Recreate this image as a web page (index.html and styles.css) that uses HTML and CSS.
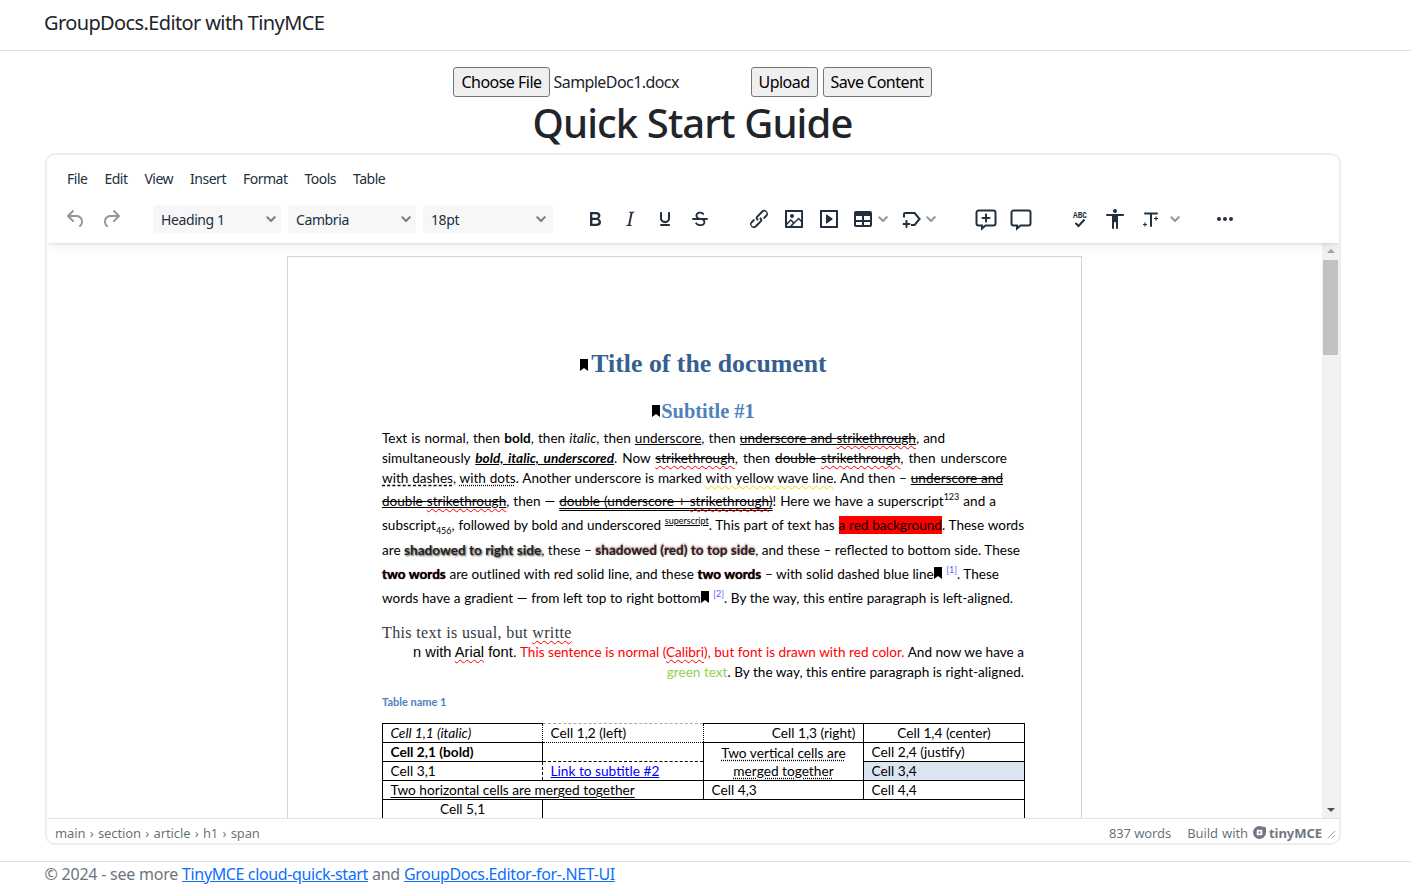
FILE: index.html
```html
<!DOCTYPE html>
<html lang="en">
<head>
<meta charset="utf-8">
<title>GroupDocs.Editor with TinyMCE</title>
<link rel="stylesheet" href="styles.css">
</head>
<body>
<header class="site-header"><a class="brand">GroupDocs.Editor with TinyMCE</a></header>
<main class="main">
  <form class="upload-form">
    <button type="button" class="btn">Choose File</button>
    <span class="file-name">SampleDoc1.docx</span>
    <button type="button" class="btn">Upload</button>
    <button type="button" class="btn">Save Content</button>
  </form>
  <h1 class="page-title">Quick Start Guide</h1>
  <section class="editor">
    <nav class="menubar">
      <span>File</span><span>Edit</span><span>View</span><span>Insert</span><span>Format</span><span>Tools</span><span>Table</span>
    </nav>
    <div class="toolbar">
      <div class="group g-history">
        <span class="tb disabled"><svg viewBox="0 0 24 24"><path d="M6.4 8H12c3.7 0 6.2 2 6.8 5.1.6 2.7-.4 5.6-2.3 6.8a1 1 0 0 1-1-1.8c1.1-.6 1.8-2.7 1.4-4.6-.5-2.1-2.1-3.5-4.9-3.5H6.4l3.3 3.3a1 1 0 1 1-1.4 1.4l-5-5a1 1 0 0 1 0-1.4l5-5a1 1 0 0 1 1.4 1.4L6.4 8Z"/></svg></span>
        <span class="tb disabled"><svg viewBox="0 0 24 24"><path d="M6.4 8H12c3.7 0 6.2 2 6.8 5.1.6 2.7-.4 5.6-2.3 6.8a1 1 0 0 1-1-1.8c1.1-.6 1.8-2.7 1.4-4.6-.5-2.1-2.1-3.5-4.9-3.5H6.4l3.3 3.3a1 1 0 1 1-1.4 1.4l-5-5a1 1 0 0 1 0-1.4l5-5a1 1 0 0 1 1.4 1.4L6.4 8Z" transform="matrix(-1 0 0 1 24 0)"/></svg></span>
      </div>
      <div class="group g-selects">
        <span class="select w128">Heading 1<svg class="chev" viewBox="0 0 10 6"><path d="M.6.6a1 1 0 0 1 1.4 0L5 3.6l3-3a1 1 0 1 1 1.4 1.4L5.7 5.7a1 1 0 0 1-1.4 0L.6 2A1 1 0 0 1 .6.6Z"/></svg></span>
        <span class="select w128">Cambria<svg class="chev" viewBox="0 0 10 6"><path d="M.6.6a1 1 0 0 1 1.4 0L5 3.6l3-3a1 1 0 1 1 1.4 1.4L5.7 5.7a1 1 0 0 1-1.4 0L.6 2A1 1 0 0 1 .6.6Z"/></svg></span>
        <span class="select w130">18pt<svg class="chev" viewBox="0 0 10 6"><path d="M.6.6a1 1 0 0 1 1.4 0L5 3.6l3-3a1 1 0 1 1 1.4 1.4L5.7 5.7a1 1 0 0 1-1.4 0L.6 2A1 1 0 0 1 .6.6Z"/></svg></span>
      </div>
      <div class="group g-format">
        <span class="tb"><svg viewBox="0 0 24 24"><path d="M7.8 19c-.3 0-.5 0-.6-.2l-.2-.5V5.7c0-.2 0-.4.2-.5l.6-.2h5c1.5 0 2.7.3 3.5 1 .7.6 1.1 1.4 1.1 2.5a3 3 0 0 1-.6 1.9c-.4.6-1 1-1.6 1.2.4.1.9.3 1.3.6s.8.7 1 1.2c.4.4.5 1 .5 1.6 0 1.3-.4 2.3-1.3 3-.8.7-2.1 1-3.8 1H7.8Zm5-8.3c.6 0 1.2-.1 1.6-.5.4-.3.6-.7.6-1.3 0-1.1-.8-1.7-2.3-1.7H9.3v3.5h3.4Zm.5 6c.7 0 1.3-.1 1.7-.4.4-.4.6-.9.6-1.5s-.2-1-.7-1.4c-.4-.3-1-.4-2-.4H9.4v3.8h4Z"/></svg></span>
        <span class="tb"><svg viewBox="0 0 24 24"><path d="m16.7 4.7-.1.9h-.3c-.6 0-1 0-1.4.3-.3.3-.4.6-.5 1.1l-2.1 9.8v.6c0 .5.4.8 1.4.8h.2l-.2.8H8l.2-.8h.2c1.1 0 1.8-.5 2-1.5l2-9.8.1-.5c0-.6-.4-.8-1.4-.8h-.3l.2-.9h5.8Z"/></svg></span>
        <span class="tb"><svg viewBox="0 0 24 24"><path d="M16 5c.6 0 1 .4 1 1v5.5a4 4 0 0 1-.4 1.8l-1 1.4a5.3 5.3 0 0 1-5.5 1 5 5 0 0 1-1.6-1c-.5-.4-.8-.9-1.1-1.4a4 4 0 0 1-.4-1.8V6c0-.6.4-1 1-1s1 .4 1 1v5.5c0 .3 0 .6.2 1l.6.7a3.3 3.3 0 0 0 2.2.8 3.4 3.4 0 0 0 2.2-.8c.3-.2.4-.5.6-.8l.2-.9V6c0-.6.4-1 1-1ZM8 17h8c.6 0 1 .4 1 1s-.4 1-1 1H8a1 1 0 0 1 0-2Z"/></svg></span>
        <span class="tb"><svg viewBox="0 0 24 24"><path d="M15.6 8.5c-.5-.7-1-1.1-1.3-1.3-.6-.4-1.3-.6-2-.6-2.7 0-2.8 1.7-2.8 2.1 0 1.6 1.8 2 3.2 2.3 4.4.9 4.6 2.8 4.6 3.9 0 1.4-.7 4.1-5 4.1A6.2 6.2 0 0 1 7 16.4l1.5-1.1c.4.6 1.6 2 3.7 2 1.6 0 2.5-.4 3-1 .5-.8.3-2-.3-2.6-.7-.7-1.7-.9-3.4-1.2-2-.4-4-1.3-4-3.9 0-2.1 1.4-3.9 4.4-3.9 1.7 0 3 .6 3.8 1.4l.5.6-.6.8Z"/><path d="M5 11h14a1 1 0 0 1 0 2H5a1 1 0 0 1 0-2Z"/></svg></span>
      </div>
      <div class="group g-insert">
        <span class="tb"><svg viewBox="0 0 24 24"><path d="M6.2 12.3a1 1 0 0 1 1.4 1.4l-2 2a2 2 0 1 0 2.6 2.8l4.8-4.8a1 1 0 0 0 0-1.4 1 1 0 1 1 1.4-1.3 2.9 2.9 0 0 1 0 4L9.6 20a3.9 3.9 0 0 1-5.5-5.5l2-2Zm11.6-.6a1 1 0 0 1-1.4-1.4l2-2a2 2 0 1 0-2.6-2.8L11 10.3a1 1 0 0 0 0 1.4A1 1 0 1 1 9.6 13a2.9 2.9 0 0 1 0-4L14.4 4a3.9 3.9 0 0 1 5.5 5.5l-2 2Z"/></svg></span>
        <span class="tb"><svg viewBox="0 0 24 24"><path d="m5 15.7 3.3-3.2c.3-.3.7-.3 1 0L12 15l4.1-4c.3-.4.8-.4 1 0l2 1.9V5H5v10.7ZM5 18v1h3l2.8-2.9-2-2L5 17.9Zm14-3-2.5-2.4-6.4 6.5H19v-4ZM4 3h16c.6 0 1 .4 1 1v16c0 .6-.4 1-1 1H4a1 1 0 0 1-1-1V4c0-.6.4-1 1-1Zm6 8a2 2 0 1 0 0-4 2 2 0 0 0 0 4Z"/></svg></span>
        <span class="tb"><svg viewBox="0 0 24 24"><path d="M4 3h16c.6 0 1 .4 1 1v16c0 .6-.4 1-1 1H4a1 1 0 0 1-1-1V4c0-.6.4-1 1-1Zm1 2v14h14V5H5Zm4.8 2.6 5.6 4a.5.5 0 0 1 0 .8l-5.6 4A.5.5 0 0 1 9 16V8a.5.5 0 0 1 .8-.4Z"/></svg></span>
        <span class="tb narrow"><svg viewBox="0 0 24 24"><path fill-rule="evenodd" d="M5 4h14a2 2 0 0 1 2 2v12a2 2 0 0 1-2 2H5a2 2 0 0 1-2-2V6c0-1.100.9-2 2-2Zm0 5v4h6V9H5Zm8 0v4h6V9h-6Zm-8 6v3h6v-3H5Zm8 0v3h6v-3h-6Z"/></svg><svg class="chev small" viewBox="0 0 10 6"><path d="M.6.6a1 1 0 0 1 1.4 0L5 3.6l3-3a1 1 0 1 1 1.4 1.4L5.700 5.700a1 1 0 0 1-1.400 0L.6 2A1 1 0 0 1 .6.6Z"/></svg></span>
        <span class="tb narrow"><svg viewBox="0 0 24 24"><path class="line" d="M5 10.500V7.200C5 6.500 5.500 6 6.200 6h9.400l5 6-5 6H12"/><path transform="translate(1.500 0)" d="M6 13c.6 0 1 .4 1 1v2h2a1 1 0 0 1 0 2H7v2a1 1 0 0 1-2 0v-2H3a1 1 0 0 1 0-2h2v-2c0-.6.4-1 1-1Z"/></svg><svg class="chev small" viewBox="0 0 10 6"><path d="M.6.6a1 1 0 0 1 1.4 0L5 3.6l3-3a1 1 0 1 1 1.4 1.4L5.700 5.700a1 1 0 0 1-1.400 0L.6 2A1 1 0 0 1 .6.6Z"/></svg></span>
      </div>
      <div class="group g-comment">
        <span class="tb"><svg viewBox="0 0 24 24"><path class="line" d="M4.500 3.500h15a2 2 0 0 1 2 2v11a2 2 0 0 1-2 2h-8l-3.500 3v-3H4.500a2 2 0 0 1-2-2v-11a2 2 0 0 1 2-2Z"/><path d="M12 6.500c.6 0 1 .4 1 1V10h2.500a1 1 0 0 1 0 2H13v2.500a1 1 0 0 1-2 0V12H8.500a1 1 0 0 1 0-2H11V7.500c0-.6.4-1 1-1Z"/></svg></span>
        <span class="tb"><svg viewBox="0 0 24 24"><path class="line" d="M4.500 3.500h15a2 2 0 0 1 2 2v11a2 2 0 0 1-2 2h-8l-3.500 3v-3H4.500a2 2 0 0 1-2-2v-11a2 2 0 0 1 2-2Z"/></svg></span>
      </div>
      <div class="group g-tools">
        <span class="tb"><svg viewBox="0 0 24 24"><text class="abc" x="13" y="11" textLength="14" lengthAdjust="spacingAndGlyphs">ABC</text><path class="line" d="M8.500 16l3 3 6-6.500"/></svg></span>
        <span class="tb"><svg viewBox="0 0 24 24"><path d="M12 2a2 2 0 0 1 2 2 2 2 0 0 1-2 2 2 2 0 0 1-2-2c0-1.100.9-2 2-2Zm8 7h-5v12c0 .6-.4 1-1 1a1 1 0 0 1-1-1v-5c0-.6-.4-1-1-1s-1 .4-1 1v5c0 .6-.4 1-1 1a1 1 0 0 1-1-1V9H4a1 1 0 1 1 0-2h16c.6 0 1 .4 1 1s-.4 1-1 1Z"/></svg></span>
        <span class="tb narrow wide-chev"><svg viewBox="0 0 24 24"><path d="M7 5.500h12a1 1 0 0 1 0 2h-5V19a1 1 0 0 1-2 0V7.500H7a1 1 0 0 1 0-2Z"/><path d="M17.500 9.500h1.200v1.400h1.400v1.200h-1.400v1.400h-1.200v-1.400h-1.400v-1.200h1.400ZM6.400 15.500h1.200v1.400H9v1.200H7.600v1.400H6.400v-1.400H5v-1.200h1.400Z"/></svg><svg class="chev small" viewBox="0 0 10 6"><path d="M.6.6a1 1 0 0 1 1.4 0L5 3.6l3-3a1 1 0 1 1 1.4 1.4L5.700 5.700a1 1 0 0 1-1.400 0L.6 2A1 1 0 0 1 .6.6Z"/></svg></span>
      </div>
      <div class="group g-more">
        <span class="tb"><svg viewBox="0 0 24 24"><path d="M6 10a2 2 0 0 0-2 2c0 1.100.9 2 2 2a2 2 0 0 0 2-2 2 2 0 0 0-2-2Zm12 0a2 2 0 0 0-2 2c0 1.100.9 2 2 2a2 2 0 0 0 2-2 2 2 0 0 0-2-2Zm-6 0a2 2 0 0 0-2 2c0 1.100.9 2 2 2a2 2 0 0 0 2-2 2 2 0 0 0-2-2Z"/></svg></span>
      </div>
    </div>
    <div class="edit-area">
      <div class="canvas">
        <article class="doc-page">
          <h2 class="doc-title"><svg class="mark" viewBox="0 0 8 12"><path d="M0 0h8v12L4 9 0 12Z"/></svg>Title of the document</h2>
          <h3 class="doc-sub"><svg class="mark" viewBox="0 0 8 12"><path d="M0 0h8v12L4 9 0 12Z"/></svg>Subtitle #1</h3>
          <div class="para">
            <div class="ln h20 l1">Text is normal, then <b>bold</b>, then <i>italic</i>, then <u>underscore</u>, then <span class="st"><u>underscore and <span class="sp">strikethrough</span></u></span>, and</div>
            <div class="ln h20 l2">simultaneously <b><i><u>bold, italic, underscored</u></i></b>. Now <span class="st"><span class="sp">strikethrough</span></span>, then <span class="st">double <span class="sp">strikethrough</span></span>, then underscore</div>
            <div class="ln h23 l3"><span class="dash">with dashes</span>, <span class="dot">with dots</span>. Another underscore is marked <span class="yw">with yellow wave line</span>. And then – <span class="st"><u>underscore and</u></span></div>
            <div class="ln h24 l4"><span class="st"><u>double <span class="sp">strikethrough</span></u></span>, then — <span class="st"><span class="dbl">double (underscore + <span class="sp">strikethrough</span>)</span></span>! Here we have a superscript<sup>123</sup> and a</div>
            <div class="ln h25 l5">subscript<sub>456</sub>, followed by bold and underscored <sup class="u-sup">superscript</sup>. This part of text has <span class="redbg">a red background</span>. These words</div>
            <div class="ln h24 l6">are <span class="sh1">shadowed to right side</span>, these – <span class="sh2">shadowed (red) to top side</span>, and these – reflected to bottom side. These</div>
            <div class="ln h24 l7"><span class="outline">two words</span> are outlined with red solid line, and these <span class="outline">two words</span> – with solid dashed blue line<svg class="mark ink" viewBox="0 0 8 12"><path d="M0 0h8v12L4 9 0 12Z"/></svg> <sup class="note">[1]</sup>. These</div>
            <div class="ln h24 l8">words have a gradient — from left top to right bottom<svg class="mark ink" viewBox="0 0 8 12"><path d="M0 0h8v12L4 9 0 12Z"/></svg> <sup class="note">[2]</sup>. By the way, this entire paragraph is left-aligned.</div>
          </div>
          <p class="usual">This text is usual, but <span class="sp">writte</span></p>
          <div class="mixed"><span class="arial">n with <span class="sp">Arial</span> font.</span> <span class="red">This sentence is normal (<span class="sp">Calibri</span>), but font is drawn with red color.</span> And now we have a</div>
          <div class="right"><span class="green">green text</span>. By the way, this entire paragraph is right-aligned.</div>
          <p class="caption">Table name 1</p>
          <table class="doc-table">
            <tr>
              <td class="c1 no-right"><i>Cell 1,1 (italic)</i></td>
              <td class="c2 cell12">Cell 1,2 (left)</td>
              <td class="c3 tr no-left">Cell 1,3 (right)</td>
              <td class="c4 tc">Cell 1,4 (center)</td>
            </tr>
            <tr>
              <td><b>Cell 2,1 (bold)</b></td>
              <td class="cell22"></td>
              <td rowspan="2" class="tc merged"><span class="dot">Two vertical cells are</span><br><span class="dot">merged together</span></td>
              <td>Cell 2,4 (justify)</td>
            </tr>
            <tr>
              <td class="no-right">Cell 3,1</td>
              <td class="cell32"><a class="doc-link">Link to subtitle #2</a></td>
              <td class="shade">Cell 3,4</td>
            </tr>
            <tr>
              <td colspan="2"><span class="dbl">Two horizontal cells are merged together</span></td>
              <td>Cell 4,3</td>
              <td>Cell 4,4</td>
            </tr>
            <tr>
              <td class="tc">Cell 5,1</td>
              <td colspan="3"></td>
            </tr>
          </table>
        </article>
      </div>
      <div class="scrollbar">
        <span class="arrow up"></span>
        <span class="thumb"></span>
        <span class="arrow down"></span>
      </div>
    </div>
    <div class="statusbar">
      <span class="path">main › section › article › h1 › span</span>
      <span class="status-right">
        <span class="words">837 words</span>
        <span class="build">Build with <svg class="tiny-logo" viewBox="0 0 14 14"><path fill-rule="evenodd" d="M7 0l5.500 1a1.500 1.500 0 0 1 1.500 1.500V7A7 7 0 1 1 7 0ZM4 5v5h5.500a.5.5 0 0 0 .5-.5V4.500a.5.5 0 0 0-.5-.5H5a1 1 0 0 0-1 1Zm2 1h2v2H6V6Z"/></svg><b class="tiny-word">tinyMCE</b></span>
        <svg class="grip" viewBox="0 0 10 10"><path d="M9 1 1 9M9 5.500 5.500 9"/></svg>
      </span>
    </div>
  </section>
</main>
<footer class="site-footer">© 2024 - see more <a>TinyMCE cloud-quick-start</a> and <a>GroupDocs.Editor-for-.NET-UI</a></footer>
</body>
</html>
```
FILE: styles.css
```css
* { box-sizing: border-box; }
html, body { margin: 0; height: 100%; }
body { font-family: "Noto Sans", "Open Sans", sans-serif; font-size: 16px; color: #212529; background: #fff; overflow: hidden; }
.site-header { height: 51px; border-bottom: 1px solid #dee2e6; padding: 9px 44px 0; }
.brand { font-size: 20px; line-height: 28px; letter-spacing: -.62px; color: #212529; }
.main { padding: 16px 70px 0 45px; }
.upload-form { display: flex; justify-content: center; align-items: center; height: 30px; padding-right: 1px; }
.btn { height: 30px; font: inherit; letter-spacing: -.52px; background: #efefef; border: 1px solid #767676; border-radius: 3px; padding: 0 7px; color: #000; margin-left: 5px; }
.btn:first-child { margin-left: 0; }
.file-name { width: 196px; padding-left: 4px; letter-spacing: -.57px; color: #212529; }
.page-title { margin: 2px 0 6px; padding-right: 1px; font-size: 40px; line-height: 48px; font-weight: 500; text-align: center; letter-spacing: -.9px; color: #212529; }
.editor { height: 692px; border: 2px solid #eee; border-radius: 10px; display: flex; flex-direction: column; overflow: hidden; }
.menubar { height: 47px; display: flex; align-items: center; padding: 0 0 0 20px; gap: 17px; font-size: 14px; letter-spacing: -.5px; color: #222f3e; flex: none; }
.toolbar { height: 41px; display: flex; align-items: flex-start; padding-left: 12px; flex: none; box-shadow: 0 2px 2px -1px rgba(34,47,62,.1), 0 8px 8px -4px rgba(34,47,62,.07); position: relative; z-index: 1; }
.group { display: flex; align-items: center; height: 34px; }
.g-history { gap: 1px; }
.g-selects { gap: 7px; margin-left: 25px; }
.g-format { gap: 1px; margin-left: 25px; }
.g-insert { gap: 1px; margin-left: 25px; }
.g-comment { gap: 1px; margin-left: 27px; }
.g-tools { gap: 2px; margin-left: 24px; }
.g-more { margin-left: 24px; }
.tb { width: 34px; height: 34px; display: flex; align-items: center; justify-content: center; flex: none; }
.tb svg { width: 24px; height: 24px; fill: #222f3e; flex: none; }
.tb.disabled svg { fill: rgba(34,47,62,.5); }
.tb.narrow { width: 47px; justify-content: flex-start; padding-left: 4px; }
.tb.wide-chev { width: 50px; }
.tb .line { fill: none; stroke: #222f3e; stroke-width: 2; }
.abc { font-family: "Liberation Mono", monospace; font-size: 9.500px; font-weight: 700; text-anchor: middle; fill: #222f3e; }
.tb svg.small { width: 10px; height: 6px; fill: rgba(34,47,62,.5); margin-left: 3px; }
.tb.wide-chev svg.small { margin-left: 8px; }
.select { height: 28px; display: flex; align-items: center; justify-content: space-between; padding: 0 5px 0 8px; background: #f7f7f7; border-radius: 3px; font-size: 14px; letter-spacing: -.4px; color: #222f3e; flex: none; }
.w128 { width: 128px; }
.w130 { width: 130px; padding-right: 7px; }
.select .chev { width: 10px; height: 6px; fill: rgba(34,47,62,.6); flex: none; }
.edit-area { flex: 1; min-height: 0; display: flex; }
.canvas { flex: 1; min-width: 0; overflow: hidden; display: flex; justify-content: center; padding-top: 13px; }
.doc-page { width: 795px; height: 900px; flex: none; border: 1px solid #d4d4d4; padding: 90px 56px 0 94px; font-family: Lato, sans-serif; font-size: 13.550px; color: #000; background: #fff; }
.doc-title { margin: 0; font: bold 25.800px/34px "Liberation Serif", serif; color: #365f91; text-align: center; height: 34px; }
.doc-sub { margin: 17px 0 0; font: bold 20.400px/26px "Liberation Serif", serif; color: #4f81bd; text-align: center; height: 26px; }
.mark { width: 8px; height: 12px; fill: #000; vertical-align: 1px; margin-right: 3px; }
.mark.ink { margin: 0; vertical-align: 0; }
.doc-sub .mark { margin-right: 1px; }
.para { margin-top: 4px; }
.ln { white-space: nowrap; text-align: justify; text-align-last: justify; }
.h20 { height: 20px; line-height: 20px; }
.h23 { height: 22px; line-height: 20px; }
.h24 { height: 24px; line-height: 22px; }
.h25 { height: 25px; line-height: 23px; }
.l1 { width: 563px; }
.l2 { width: 625px; }
.l3 { width: 621px; }
.l4 { width: 614px; }
.l5 { width: 642px; }
.l6 { width: 638px; }
.l7 { width: 617px; }
.l8 { width: 631px; }
.para sup, .para sub { font-size: 9px; line-height: 0; }
.st { text-decoration: line-through; }
.sp { text-decoration: underline wavy #f00 1px; text-underline-offset: 2px; }
.dash { text-decoration: underline dashed #000; text-underline-offset: 2px; }
.dot { text-decoration: underline dotted #000; text-underline-offset: 2px; }
.yw { text-decoration: underline wavy #e8e000 1px; text-underline-offset: 2px; }
.dbl { text-decoration: underline double #000; text-underline-offset: 2px; }
.u-sup { text-decoration: underline; }
.redbg { background: #f00; padding: 1px 0; }
.sh1 { font-weight: 700; text-shadow: 1px 1px 2px rgba(0,0,0,.7); color: #222; }
.sh2 { font-weight: 700; text-shadow: 0 -1px 2px rgba(120,0,0,.7); color: #222; }
.outline { font-weight: 700; text-shadow: 0 0 1px #500; }
.note { color: #5a5aff; margin-left: 1px; }
.usual { margin: 12px 0 0; height: 19px; line-height: 19px; font-family: "Liberation Serif", serif; font-size: 16px; letter-spacing: .37px; color: #333a44; }
.mixed { height: 20px; line-height: 20px; width: 642px; padding-left: 31px; white-space: nowrap; text-align: justify; text-align-last: justify; }
.arial { font-family: "Liberation Sans", sans-serif; font-size: 14.670px; }
.red { color: #f00; }
.right { height: 20px; line-height: 20px; text-align: right; white-space: nowrap; padding-right: 1px; font-size: 13.600px; }
.green { color: #92d050; }
.caption { margin: 10px 0 0; height: 20px; line-height: 20px; font-size: 11px; font-weight: 700; color: #4f81bd; }
.doc-table { margin-top: 11px; width: 643px; border-collapse: collapse; table-layout: fixed; font-size: 13.700px; }
.doc-table td { border: 1px solid #000; height: 19px; padding: 0 7.500px; line-height: 18px; white-space: nowrap; }
.c1 { width: 160px; }
.c2 { width: 161px; }
.c3 { width: 160px; }
.tr { text-align: right; }
.tc { text-align: center; }
.doc-table .no-right { border-right: none; }
.doc-table .no-left { border-left: none; }
.doc-table .cell12 { border-top: 1px dashed #aaa; border-left: 1px dotted #000; border-right: 1px dotted #000; border-bottom: 1px dotted #000; }
.doc-table .cell22 { border-top: none; border-bottom: 1px dashed #000; }
.doc-table .cell32 { border-top: none; border-left: 1px dashed #000; }
.doc-table .shade { background: #dbe5f1; }
.doc-table .merged { line-height: 18px; }
.doc-link { color: #00f; text-decoration: underline; }
.scrollbar { width: 17px; background: #f1f1f1; flex: none; display: flex; flex-direction: column; align-items: center; position: relative; }
.arrow { width: 0; height: 0; border-left: 4px solid transparent; border-right: 4px solid transparent; flex: none; }
.arrow.up { border-bottom: 4px solid #a3a3a3; margin-top: 6px; }
.arrow.down { border-top: 4px solid #505050; margin-top: auto; margin-bottom: 6px; }
.thumb { width: 15px; height: 95px; background: #c1c1c1; margin-top: 7px; flex: none; }
.statusbar { height: 25px; flex: none; display: flex; justify-content: space-between; align-items: center; border-top: 1px solid #e3e3e3; padding: 3px 3px 0 8px; font-size: 13px; letter-spacing: -.1px; color: rgba(34,47,62,.7); background: #fff; }
.path { word-spacing: 1px; }
.status-right { display: flex; align-items: center; }
.words { margin-right: 16px; }
.build { display: flex; align-items: center; word-spacing: 1px; }
.tiny-logo { width: 13px; height: 13px; fill: #6f7782; margin-left: 5px; }
.tiny-word { font-family: "Noto Sans", sans-serif; font-weight: 700; font-size: 13.100px; margin-left: 3px; color: #6f7782; letter-spacing: -.1px; }
.grip { width: 9px; height: 9px; margin-left: 5px; margin-top: 3px; fill: none; stroke: rgba(34,47,62,.5); stroke-width: 1; }
.site-footer { margin-top: 16px; height: 33px; border-top: 1px solid #dee2e6; padding: 0 44.500px; line-height: 24px; color: #6c757d; letter-spacing: -.22px; white-space: nowrap; }
.site-footer a { color: #0d6efd; text-decoration: underline; letter-spacing: -.37px; }
```
